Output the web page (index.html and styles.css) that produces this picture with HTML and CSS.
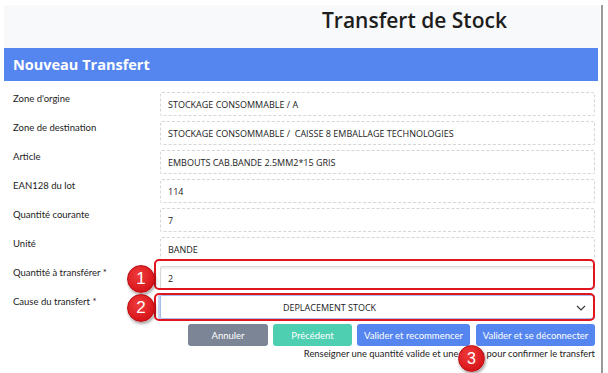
FILE: index.html
```html
<!DOCTYPE html>
<html lang="fr">
<head>
<meta charset="utf-8">
<title>Transfert de Stock</title>
<link rel="stylesheet" href="styles.css">
</head>
<body>
<div class="frame">
  <div class="topbar"><h1 class="title">Transfert de Stock</h1></div>
  <div class="card-header">Nouveau Transfert</div>
  <div class="form">
    <div class="row"><label class="label">Zone d'orgine</label><div class="field ro">STOCKAGE CONSOMMABLE / A</div></div>
    <div class="row"><label class="label">Zone de destination</label><div class="field ro">STOCKAGE CONSOMMABLE /&nbsp; CAISSE 8 EMBALLAGE TECHNOLOGIES</div></div>
    <div class="row"><label class="label">Article</label><div class="field ro">EMBOUTS CAB.BANDE 2.5MM2*15 GRIS</div></div>
    <div class="row"><label class="label">EAN128 du lot</label><div class="field ro">114</div></div>
    <div class="row"><label class="label">Quantité courante</label><div class="field ro">7</div></div>
    <div class="row"><label class="label">Unité</label><div class="field ro">BANDE</div></div>
    <div class="row">
      <label class="label">Quantité à transférer *</label>
      <div class="field input">2</div>
      <span class="hl hl-1"></span>
      <span class="badge badge-1">1</span>
    </div>
    <div class="row">
      <label class="label">Cause du transfert *</label>
      <div class="field select"><span class="select-text">DEPLACEMENT STOCK</span>
        <svg class="chev" width="10" height="6" viewBox="0 0 10 6"><path d="M1 1 L5 5 L9 1" fill="none" stroke="#333" stroke-width="1.1"/></svg>
      </div>
      <span class="hl hl-2"></span>
      <span class="badge badge-2">2</span>
    </div>
    <div class="actions">
      <button class="btn btn-gray">Annuler</button>
      <button class="btn btn-teal">Précédent</button>
      <button class="btn btn-blue">Valider et recommencer</button>
      <button class="btn btn-blue btn-last">Valider et se déconnecter</button>
    </div>
    <div class="help">Renseigner une quantité valide et une cause pour confirmer le transfert<span class="badge badge-3">3</span></div>
  </div>
</div>
</body>
</html>
```
FILE: styles.css
```css
html, body {
  margin: 0;
  padding: 0;
  background: #ffffff;
}
body {
  font-family: "Lato", "Open Sans", sans-serif;
  color: #212529;
  width: 608px;
  height: 373px;
  overflow: hidden;
}
.frame {
  width: 603px;
  height: 370px;
  box-sizing: border-box;
  border-right: 2px solid #9a9a9a;
  border-bottom: 2px solid #9a9a9a;
  position: relative;
}
.topbar {
  margin: 5px 0 0 4px;
  width: 596px;
  height: 43px;
  background: #f8f9fa;
  display: flex;
  align-items: flex-start;
}
.title {
  margin: 1px 0 0 318px;
  font-family: "Open Sans", "Noto Sans", sans-serif;
  font-size: 21px;
  line-height: 28px;
  font-weight: 600;
  color: #1d1d1d;
}
.card-header {
  margin-left: 4px;
  width: 594px;
  height: 33px;
  box-sizing: border-box;
  background: #5586f0;
  color: #ffffff;
  font-family: "Open Sans", "Noto Sans", sans-serif;
  font-size: 14.5px;
  font-weight: 700;
  display: flex;
  align-items: center;
  padding-left: 9px;
}
.form {
  padding: 11px 0 0 13px;
  width: 582px;
}
.row {
  display: flex;
  align-items: flex-start;
  height: 24px;
  margin-bottom: 5px;
  position: relative;
}
.label {
  width: 147px;
  flex: none;
  font-size: 9.5px;
  line-height: 14px;
  color: #222;
}
.field {
  width: 435px;
  height: 24px;
  box-sizing: border-box;
  font-family: "Open Sans", "Noto Sans", sans-serif;
  font-size: 9px;
  display: flex;
  align-items: center;
  padding-left: 7px;
  color: #222;
  border-radius: 2px;
}
.ro {
  border: 1px dashed #d6d6d6;
  background: #ffffff;
}
.input {
  border: 1px solid #d8d8d8;
  box-shadow: inset 0 2px 2px rgba(0,0,0,0.07);
  background: #fff;
}
.select {
  border: 1px solid #a9bdec;
  box-shadow: -1px 0 0 1px #c4d3f5;
  justify-content: center;
  position: relative;
  padding-left: 0;
  background: #fff;
}
.select-text {
  margin-left: -96px;
}
.chev {
  position: absolute;
  right: 8px;
  top: 9px;
}
.hl {
  position: absolute;
  left: 141px;
  width: 441px;
  border: 2px solid #e0151d;
  border-radius: 5px;
  box-sizing: border-box;
  pointer-events: none;
}
.hl-1 {
  top: -7px;
  height: 31px;
}
.hl-2 {
  top: -2px;
  height: 28px;
}
.badge {
  position: absolute;
  width: 28px;
  height: 28px;
  border-radius: 50%;
  background: radial-gradient(circle at 40% 35%, #f03c3c 0%, #d8161c 70%, #c01015 100%);
  border: 1px solid #b80d12;
  box-shadow: 1px 2px 3px rgba(0,0,0,0.35);
  color: #ffffff;
  font-size: 17px;
  font-family: "Liberation Sans", "DejaVu Sans", sans-serif;
  display: flex;
  align-items: center;
  justify-content: center;
  box-sizing: border-box;
}
.badge-1 {
  left: 114px;
  top: -1px;
}
.badge-2 {
  left: 114px;
  top: -1px;
}
.actions {
  display: flex;
  justify-content: flex-end;
  gap: 5px;
  width: 582px;
}
.btn {
  height: 22px;
  border: none;
  border-radius: 3px;
  color: #ffffff;
  font-family: "Lato", "Open Sans", sans-serif;
  font-size: 9.5px;
  padding: 0;
  cursor: pointer;
}
.btn-gray { background: #7b8595; width: 80px; }
.btn-teal { background: #4ecfb2; width: 79px; }
.btn-blue { background: #5586f0; width: 113px; }
.btn-last { width: 119px; margin-left: 1px; }
.help {
  position: relative;
  text-align: right;
  width: 582px;
  font-size: 9.4px;
  line-height: 14px;
  margin-top: 1px;
  color: #222;
}
.badge-3 {
  left: 445px;
  top: -2px;
  width: 27px;
  height: 27px;
  font-size: 16px;
}
```
